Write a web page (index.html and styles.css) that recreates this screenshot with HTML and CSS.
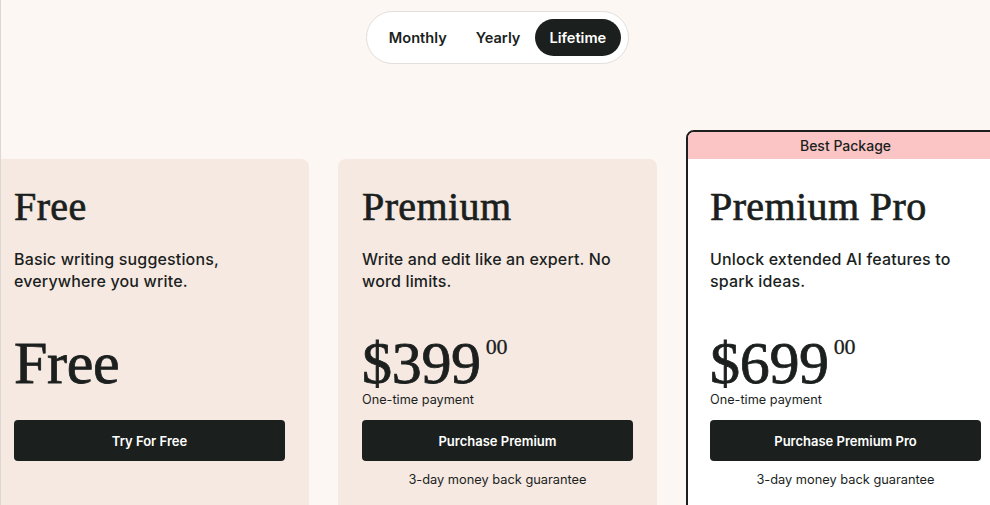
FILE: index.html
```html
<!DOCTYPE html>
<html lang="en">
<head>
<meta charset="utf-8">
<title>Pricing</title>
<link rel="stylesheet" href="styles.css">
</head>
<body>
<div class="page">
  <div class="toggle-row">
    <div class="toggle">
      <button class="tab">Monthly</button>
      <button class="tab">Yearly</button>
      <button class="tab active">Lifetime</button>
    </div>
  </div>
  <div class="cards">
    <div class="card regular">
      <h2 class="title">Free</h2>
      <p class="desc">Basic writing suggestions, everywhere you write.</p>
      <div class="price-block">
        <div class="price">Free</div>
      </div>
      <button class="cta">Try For Free</button>
    </div>
    <div class="card regular">
      <h2 class="title">Premium</h2>
      <p class="desc">Write and edit like an expert. No word limits.</p>
      <div class="price-block">
        <div class="price">$399<sup class="cents">00</sup></div>
        <div class="period">One-time payment</div>
      </div>
      <button class="cta">Purchase Premium</button>
      <p class="guarantee">3-day money back guarantee</p>
    </div>
    <div class="card featured">
      <div class="badge">Best Package</div>
      <div class="card-body">
        <h2 class="title">Premium Pro</h2>
        <p class="desc">Unlock extended AI features to spark ideas.</p>
        <div class="price-block">
          <div class="price">$699<sup class="cents">00</sup></div>
          <div class="period">One-time payment</div>
        </div>
        <button class="cta">Purchase Premium Pro</button>
        <p class="guarantee">3-day money back guarantee</p>
      </div>
    </div>
  </div>
</div>
</body>
</html>
```

FILE: styles.css
```css
html, body {
  margin: 0;
  padding: 0;
  background: #fdf7f4;
  overflow: hidden;
}
body {
  font-family: Inter, "Noto Sans", "Liberation Sans", sans-serif;
  color: #1b1f1e;
}
.page {
  width: 993px;
  height: 505px;
  border-left: 1px solid #ddd6d2;
  overflow: hidden;
  padding-top: 11px;
  box-sizing: content-box;
}
.toggle-row {
  display: flex;
  justify-content: center;
}
.toggle {
  display: flex;
  background: #ffffff;
  border: 1px solid #e2dedc;
  border-radius: 999px;
  padding: 7px;
}
.tab {
  font-family: Inter, "Noto Sans", sans-serif;
  font-size: 14.6px;
  font-weight: 600;
  color: #1b1f1e;
  background: transparent;
  border: none;
  border-radius: 999px;
  height: 37px;
  padding: 0 14.5px;
  cursor: pointer;
}
.tab.active {
  background: #1b1f1e;
  color: #ffffff;
}
.cards {
  display: flex;
  justify-content: center;
  align-items: flex-start;
  gap: 29px;
  margin-top: 66px;
}
.card {
  flex: 0 0 319px;
  width: 319px;
  box-sizing: border-box;
  border-radius: 8px;
  height: 400px;
}
.card.regular {
  background: #f6e9e2;
  margin-top: 29px;
  padding: 24px 24px;
}
.card.featured {
  background: #ffffff;
  border: 2px solid #1b1f1e;
  overflow: hidden;
}
.badge {
  background: #fcc5c5;
  height: 27px;
  display: flex;
  align-items: center;
  justify-content: center;
  font-size: 14px;
  font-weight: 500;
  color: #1b1f1e;
}
.card-body {
  padding: 24px 22px;
}
.title {
  font-family: "Liberation Serif", "Times New Roman", serif;
  font-weight: 400;
  font-size: 40px;
  line-height: 48px;
  margin: 0;
  color: #1b1f1e;
  letter-spacing: 0.4px;
  -webkit-text-stroke: 0.7px #1b1f1e;
}
.desc {
  margin: 17px 0 0;
  font-size: 16px;
  font-weight: 500;
  line-height: 22px;
  color: #1b1f1e;
  letter-spacing: 0.15px;
}
.price-block {
  margin-top: 45px;
  height: 70px;
  display: flex;
  flex-direction: column;
}
.price {
  font-family: "Liberation Serif", "Times New Roman", serif;
  font-size: 60px;
  line-height: 52px;
  height: 52px;
  color: #1b1f1e;
  letter-spacing: -0.3px;
  -webkit-text-stroke: 0.8px #1b1f1e;
}
.cents {
  font-size: 22px;
  vertical-align: top;
  line-height: 20px;
  margin-left: 5px;
  -webkit-text-stroke: 0.3px #1b1f1e;
}
.period {
  margin-top: 3px;
  font-size: 12.7px;
  line-height: 15px;
  color: #1b1f1e;
}
.cta {
  display: block;
  width: 100%;
  height: 41px;
  margin-top: 13px;
  background: #1b1f1e;
  color: #ffffff;
  border: none;
  border-radius: 4px;
  font-family: Inter, "Noto Sans", sans-serif;
  font-size: 13px;
  font-weight: 600;
  cursor: pointer;
}
.guarantee {
  margin: 11px 0 0;
  text-align: center;
  font-size: 12.8px;
  line-height: 16px;
  color: #1b1f1e;
}
```
